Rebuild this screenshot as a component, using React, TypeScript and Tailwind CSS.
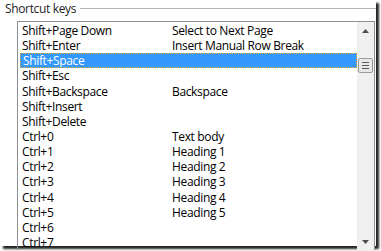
import React from "react";

interface Shortcut {
  keys: string;
  command: string;
}

const shortcuts: Shortcut[] = [
  { keys: "Shift+Page Down", command: "Select to Next Page" },
  { keys: "Shift+Enter", command: "Insert Manual Row Break" },
  { keys: "Shift+Space", command: "" },
  { keys: "Shift+Esc", command: "" },
  { keys: "Shift+Backspace", command: "Backspace" },
  { keys: "Shift+Insert", command: "" },
  { keys: "Shift+Delete", command: "" },
  { keys: "Ctrl+0", command: "Text body" },
  { keys: "Ctrl+1", command: "Heading 1" },
  { keys: "Ctrl+2", command: "Heading 2" },
  { keys: "Ctrl+3", command: "Heading 3" },
  { keys: "Ctrl+4", command: "Heading 4" },
  { keys: "Ctrl+5", command: "Heading 5" },
  { keys: "Ctrl+6", command: "" },
  { keys: "Ctrl+7", command: "" },
];

const SELECTED = 2;

const ScrollBar = () => {
  return (
    <div className="flex w-[17px] shrink-0 flex-col bg-[#f0f0f0]">
      <div className="flex h-[17px] items-center justify-center">
        <svg width="7" height="4" viewBox="0 0 7 4">
          <path d="M3.5 0 L7 4 L0 4 Z" fill="#4d4d4d" />
        </svg>
      </div>
      <div className="mx-[1px] mt-[19px] flex h-[15px] flex-col items-center justify-center gap-[2px] rounded-[2px] border border-[#9a9a9a] bg-[#e8e8e8]">
        <div className="h-px w-[7px] bg-[#5c5c5c]" />
        <div className="h-px w-[7px] bg-[#5c5c5c]" />
        <div className="h-px w-[7px] bg-[#5c5c5c]" />
      </div>
      <div className="flex-1" />
      <div className="flex h-[17px] items-center justify-center">
        <svg width="7" height="4" viewBox="0 0 7 4">
          <path d="M0 0 L7 0 L3.5 4 Z" fill="#4d4d4d" />
        </svg>
      </div>
    </div>
  );
};

const App = () => {
  return (
    <div
      className="h-[251px] w-[381px] overflow-hidden bg-white text-[12px] tracking-[-0.35px] text-black"
      style={{ fontFamily: '"Open Sans", "Noto Sans", sans-serif' }}
    >
      <div className="flex h-[246px] w-[376px] flex-col bg-white shadow-[3px_3px_2px_rgba(0,0,0,0.85)]">
        <div className="flex h-[17px] items-center">
          <p className="pl-[5px] pr-[4px] leading-[17px] text-[#1e1e1e]">Shortcut keys</p>
          <div className="mt-[-1px] h-px flex-1 bg-[#b4b4b4]" />
        </div>
        <div className="ml-[17px] mr-[1px] mt-[4px] flex flex-1 border border-b-0 border-[#8e8f8f]">
          <div className="flex-1 overflow-hidden pl-[2px] pt-[1px]">
            {shortcuts.map((s, i) => (
              <div
                key={s.keys}
                className={
                  i === SELECTED
                    ? "flex h-[15.15px] items-center overflow-hidden border border-dotted border-[#f5a623] bg-[#3399ff] text-white"
                    : "flex h-[15.15px] items-center overflow-hidden"
                }
              >
                <span className="w-[152px] shrink-0 pl-[2px] leading-[15px]">
                  {s.keys}
                </span>
                <span className="leading-[15px]">{s.command}</span>
              </div>
            ))}
          </div>
          <ScrollBar />
        </div>
      </div>
    </div>
  );
};

export default App;
